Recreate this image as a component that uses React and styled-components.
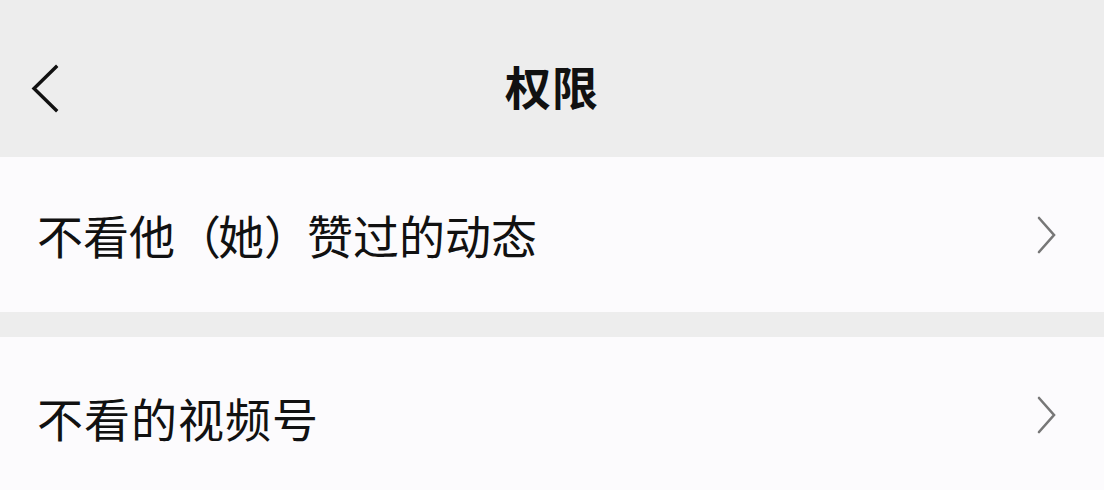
import React from 'react';
import styled, { createGlobalStyle } from 'styled-components';

const GlobalStyle = createGlobalStyle`
  html, body {
    margin: 0;
    padding: 0;
    background: #ededed;
  }
  body {
    font-family: "Noto Sans CJK SC", "Noto Sans", sans-serif;
    color: #111;
  }
`;

const Page = styled.div`
  width: 1104px;
  height: 490px;
  overflow: hidden;
  background: #ededed;
`;

const Header = styled.header`
  height: 157px;
  box-sizing: border-box;
  padding-top: 24px;
  display: grid;
  grid-template-columns: 120px 1fr 120px;
  align-items: center;
`;

const BackButton = styled.button`
  border: none;
  background: none;
  padding: 0 0 0 30px;
  height: 60px;
  display: flex;
  align-items: center;
  justify-self: start;
  transform: translateY(-2px);
`;

const Title = styled.h1`
  margin: 0;
  text-align: center;
  font-size: 46px;
  font-weight: 700;
  line-height: 1;
  letter-spacing: 1px;
  color: #111;
  transform: translateY(-6px);
`;

const Section = styled.section`
  margin-bottom: 25px;
  background: #fcfbfd;
`;

const Row = styled.div`
  height: 155px;
  box-sizing: border-box;
  padding: 0 46px 0 37px;
  display: flex;
  align-items: center;
  justify-content: space-between;
`;

const Label = styled.span`
  font-size: 46px;
  line-height: 1;
  color: #111;
  letter-spacing: ${p => p.$spacing || 0}px;
  transform: translateY(${p => p.$shift || 0}px);
`;

const Paren = styled.span`
  letter-spacing: -3px;
`;

const BackIcon = () => (
  <svg width="32" height="50" viewBox="0 0 32 50">
    <polyline points="26,3 4,24.5 26,46" fill="none" stroke="#111" strokeWidth="3.4" strokeLinecap="square" />
  </svg>
);

const ChevronRight = () => (
  <svg width="22" height="38" viewBox="0 0 22 38">
    <polyline points="3,2 18,19 3,36" fill="none" stroke="#777" strokeWidth="2.6" strokeLinecap="round" />
  </svg>
);

export default function App() {
  return (
    <Page>
      <GlobalStyle />
      <Header>
        <BackButton aria-label="返回">
          <BackIcon />
        </BackButton>
        <Title>权限</Title>
        <div />
      </Header>
      <Section>
        <Row>
          <Label $shift={-1}>
            不看他<Paren>（</Paren>她<Paren>）</Paren>赞过的动态
          </Label>
          <ChevronRight />
        </Row>
      </Section>
      <Section>
        <Row>
          <Label $shift={2} $spacing={1}>不看的视频号</Label>
          <ChevronRight />
        </Row>
      </Section>
    </Page>
  );
}
